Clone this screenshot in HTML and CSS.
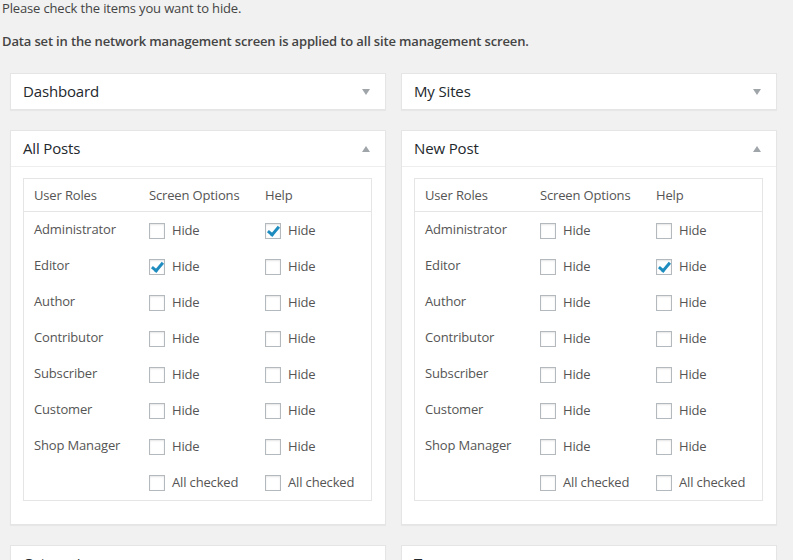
FILE: index.html
```html
<!DOCTYPE html>
<html lang="en">
<head>
<meta charset="utf-8">
<title>Hide items</title>
<link rel="stylesheet" href="styles.css">
</head>
<body>
<div class="page">
  <div class="intro">
    <p>Please check the items you want to hide.</p>
    <p class="note">Data set in the network management screen is applied to all site management screen.</p>
  </div>
  <div class="boxes">
    <div class="box closed">
      <div class="hndle"><span>Dashboard</span><span class="arrow down"></span></div>
    </div>
    <div class="box closed">
      <div class="hndle"><span>My Sites</span><span class="arrow down"></span></div>
    </div>

    <div class="box">
      <div class="hndle"><span>All Posts</span><span class="arrow up"></span></div>
      <div class="inside">
        <div class="roles">
          <div class="row head"><span>User Roles</span><span>Screen Options</span><span>Help</span></div>
          <div class="row"><span>Administrator</span><label class="cb"><i class="box-i"></i>Hide</label><label class="cb"><i class="box-i on"></i>Hide</label></div>
          <div class="row"><span>Editor</span><label class="cb"><i class="box-i on"></i>Hide</label><label class="cb"><i class="box-i"></i>Hide</label></div>
          <div class="row"><span>Author</span><label class="cb"><i class="box-i"></i>Hide</label><label class="cb"><i class="box-i"></i>Hide</label></div>
          <div class="row"><span>Contributor</span><label class="cb"><i class="box-i"></i>Hide</label><label class="cb"><i class="box-i"></i>Hide</label></div>
          <div class="row"><span>Subscriber</span><label class="cb"><i class="box-i"></i>Hide</label><label class="cb"><i class="box-i"></i>Hide</label></div>
          <div class="row"><span>Customer</span><label class="cb"><i class="box-i"></i>Hide</label><label class="cb"><i class="box-i"></i>Hide</label></div>
          <div class="row"><span>Shop Manager</span><label class="cb"><i class="box-i"></i>Hide</label><label class="cb"><i class="box-i"></i>Hide</label></div>
          <div class="row"><span></span><label class="cb"><i class="box-i"></i>All checked</label><label class="cb"><i class="box-i"></i>All checked</label></div>
        </div>
      </div>
    </div>

    <div class="box">
      <div class="hndle"><span>New Post</span><span class="arrow up"></span></div>
      <div class="inside">
        <div class="roles">
          <div class="row head"><span>User Roles</span><span>Screen Options</span><span>Help</span></div>
          <div class="row"><span>Administrator</span><label class="cb"><i class="box-i"></i>Hide</label><label class="cb"><i class="box-i"></i>Hide</label></div>
          <div class="row"><span>Editor</span><label class="cb"><i class="box-i"></i>Hide</label><label class="cb"><i class="box-i on"></i>Hide</label></div>
          <div class="row"><span>Author</span><label class="cb"><i class="box-i"></i>Hide</label><label class="cb"><i class="box-i"></i>Hide</label></div>
          <div class="row"><span>Contributor</span><label class="cb"><i class="box-i"></i>Hide</label><label class="cb"><i class="box-i"></i>Hide</label></div>
          <div class="row"><span>Subscriber</span><label class="cb"><i class="box-i"></i>Hide</label><label class="cb"><i class="box-i"></i>Hide</label></div>
          <div class="row"><span>Customer</span><label class="cb"><i class="box-i"></i>Hide</label><label class="cb"><i class="box-i"></i>Hide</label></div>
          <div class="row"><span>Shop Manager</span><label class="cb"><i class="box-i"></i>Hide</label><label class="cb"><i class="box-i"></i>Hide</label></div>
          <div class="row"><span></span><label class="cb"><i class="box-i"></i>All checked</label><label class="cb"><i class="box-i"></i>All checked</label></div>
        </div>
      </div>
    </div>

    <div class="box closed">
      <div class="hndle"><span>Categories</span><span class="arrow down"></span></div>
    </div>
    <div class="box closed">
      <div class="hndle"><span>Tags</span><span class="arrow down"></span></div>
    </div>
  </div>
</div>
</body>
</html>
```
FILE: styles.css
```css
html, body {
  margin: 0;
  padding: 0;
  background: #f1f1f1;
  height: 560px;
  overflow: hidden;
}
body {
  font-family: "Open Sans", "Liberation Sans", sans-serif;
  font-size: 13px;
  line-height: 1.5;
  color: #444;
  letter-spacing: -0.15px;
}
.page {
  margin-top: -13.75px;
}
.intro {
  padding-left: 2px;
}
.intro p {
  margin: 13px 0;
}
.intro .note {
  font-weight: 600;
}
.boxes {
  display: grid;
  grid-template-columns: 376px 376px;
  column-gap: 15px;
  row-gap: 20px;
  margin: 22px 0 0 10px;
  align-items: start;
}
.box {
  background: #fff;
  border: 1px solid #e5e5e5;
  box-shadow: 0 1px 1px rgba(0,0,0,.04);
}
.hndle {
  display: flex;
  justify-content: space-between;
  align-items: center;
  padding: 8px 15px 8px 12px;
  font-size: 15px;
  font-weight: 400;
  line-height: 19px;
  color: #23282d;
  letter-spacing: -0.15px;
}
.box:not(.closed) .hndle {
  border-bottom: 1px solid #eee;
}
.arrow {
  width: 0;
  height: 0;
  border-left: 4.5px solid transparent;
  border-right: 4.5px solid transparent;
  margin-top: 1px;
}
.arrow.down { border-top: 6px solid #a0a5aa; }
.arrow.up { border-bottom: 6px solid #a0a5aa; }
.inside {
  padding: 11px 13px 23px 12px;
}
.roles {
  border: 1px solid #e5e5e5;
  color: #555;
}
.row {
  display: grid;
  grid-template-columns: 115px 116px 1fr;
  align-items: center;
  height: 36px;
  padding-left: 10px;
}
.row.head {
  height: 32px;
  border-bottom: 1px solid #e5e5e5;
}
.row span { margin-top: -2px; }
.row.head span { margin-top: 0; }
.cb {
  display: flex;
  align-items: center;
  gap: 7px;
  margin-top: 1px;
}
.box-i {
  display: block;
  position: relative;
  width: 14px;
  height: 14px;
  border: 1px solid #b4b9be;
  background: #fff;
  box-shadow: inset 0 1px 2px rgba(0,0,0,.1);
}
.box-i.on::after {
  content: "";
  position: absolute;
  left: 4px;
  top: 0px;
  width: 4px;
  height: 9px;
  border-right: 3px solid #1e8cbe;
  border-bottom: 3px solid #1e8cbe;
  transform: rotate(40deg);
}
```
